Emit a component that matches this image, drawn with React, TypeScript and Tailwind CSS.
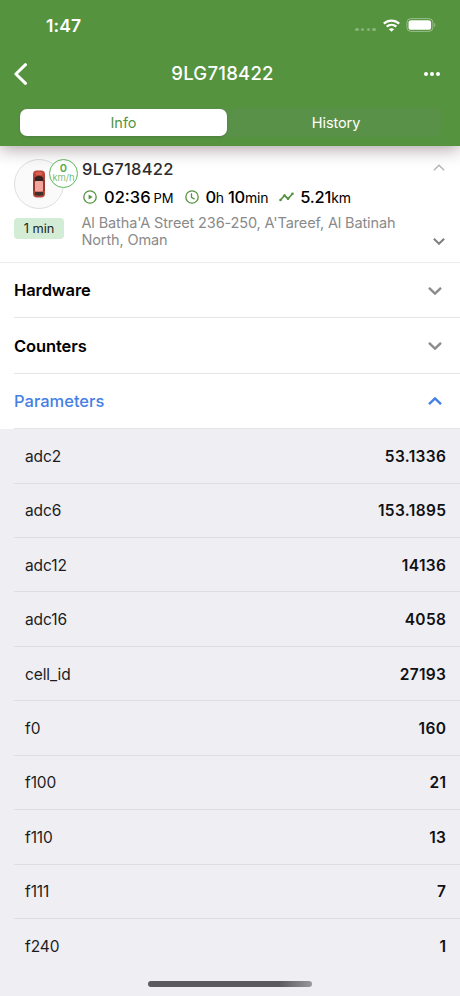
import React from 'react';

interface Parameter {
  name: string;
  value: string;
}

const parameters: Parameter[] = [
  { name: 'adc2', value: '53.1336' },
  { name: 'adc6', value: '153.1895' },
  { name: 'adc12', value: '14136' },
  { name: 'adc16', value: '4058' },
  { name: 'cell_id', value: '27193' },
  { name: 'f0', value: '160' },
  { name: 'f100', value: '21' },
  { name: 'f110', value: '13' },
  { name: 'f111', value: '7' },
  { name: 'f240', value: '1' },
];

const Chevron: React.FC<{ up?: boolean; className?: string; strokeWidth?: number }> = ({
  up,
  className,
  strokeWidth = 2.4,
}) => (
  <svg viewBox="0 0 14 8" fill="none" stroke="currentColor" strokeWidth={strokeWidth} className={className}>
    <path d={up ? 'M1 7.2 7 1.4l6 5.8' : 'M1 .8l6 5.8L13 .8'} />
  </svg>
);

const StatusBar: React.FC = () => (
  <div className="flex h-[50px] items-center justify-between pl-[46px] pr-[24px]">
    <span className="mt-px text-[17.5px] font-semibold leading-5 tracking-[0.15px]">1:47</span>
    <div className="flex items-center">
      <div className="mt-[9px] flex gap-[2.2px]">
        {[0, 1, 2, 3].map(dot => (
          <span key={dot} className="h-[3.6px] w-[3.6px] rounded-full bg-white/30" />
        ))}
      </div>
      <svg viewBox="0 0 17 13" className="ml-[7px] h-[13px] w-[17px]" fill="none" stroke="white" strokeWidth="2.3">
        <path d="M.8 4.6C5.2.5 11.8.5 16.2 4.6" />
        <path d="M3.7 7.7c2.8-2.5 6.8-2.5 9.6 0" />
        <path d="M8.5 12.8 5.9 10.2c1.5-1.3 3.7-1.3 5.2 0Z" fill="white" stroke="none" />
      </svg>
      <svg viewBox="0 0 30 14" className="ml-[6px] h-[14px] w-[30px]">
        <rect x=".9" y=".6" width="26" height="12.8" rx="4" fill="none" stroke="white" strokeOpacity=".4" />
        <rect x="2.5" y="2.2" width="22.6" height="9.6" rx="2.6" fill="white" />
        <path d="M28.3 4.8v4.4c1.4-.7 1.4-3.7 0-4.4Z" fill="white" fillOpacity=".45" />
      </svg>
    </div>
  </div>
);

const Header: React.FC = () => (
  <header className="relative z-10 h-[146px] bg-[#55933f] text-white shadow-[0_3px_16px_rgba(60,30,40,0.42)]">
    <StatusBar />
    <div className="grid h-[48px] grid-cols-[60px_1fr_60px] items-center">
      <svg
        viewBox="0 0 14 22"
        className="ml-[14px] h-[22px] w-[14px]"
        fill="none"
        stroke="white"
        strokeWidth="3"
        strokeLinecap="round"
        strokeLinejoin="round"
      >
        <path d="M11.5 1.7 1.9 11l9.6 9.3" />
      </svg>
      <h1 className="pr-[15px] text-center text-[18.5px] font-medium tracking-[0.25px]">9LG718422</h1>
      <div className="flex justify-end gap-[1.6px] pr-[20.5px]">
        {[0, 1, 2].map(dot => (
          <span key={dot} className="h-[4px] w-[4px] rounded-full bg-white" />
        ))}
      </div>
    </div>
    <div className="mx-[19px] mt-[10px] grid h-[29px] grid-cols-2 rounded-[7px] bg-[#5a9149] px-px text-[14.5px]">
      <button className="mt-[1px] h-[27px] w-[207px] rounded-[7px] bg-white text-[#55933f] shadow-sm">Info</button>
      <button className="h-[29px] pl-[2px] tracking-[-0.1px]">History</button>
    </div>
  </header>
);

const Car: React.FC = () => (
  <svg viewBox="0 0 14 28" className="h-[28px] w-[14px]">
    <rect x="1" y=".5" width="12" height="27" rx="4" fill="#b9443a" />
    <path d="M3.3 2.5Q7 .8 10.7 2.5L10 5H4Z" fill="#d9604f" />
    <path d="M2.4 8q4.6-4.5 9.2 0l-.6 3.5H3Z" fill="#35211f" />
    <rect x="3" y="11" width="8" height="10.5" rx="1" fill="#f2a59d" />
    <path d="M2 10v11M12 10v11" stroke="#672720" strokeWidth=".8" />
    <path d="M3 22h8l.5 3q-4.500 1.500-9 0Z" fill="#40302a" />
  </svg>
);

const VehicleCard: React.FC = () => (
  <section className="flex h-[117px] border-b border-[#ececee] bg-white">
    <div className="relative w-[81px] shrink-0 pl-[14px] pt-[13px]">
      <div className="flex h-[50px] w-[50px] items-center justify-center rounded-full border border-[#dedede] bg-[#fafafa]">
        <Car />
      </div>
      <div className="absolute left-[49px] top-[13px] flex h-[29px] w-[29px] flex-col items-center rounded-full border-[1.5px] border-[#5db75b] bg-white/90 text-[#55ac51]">
        <span className="mt-[2px] text-[11px] font-semibold leading-[12px]">0</span>
        <span className="-mt-[1px] text-[9.5px] font-light leading-[10px]">km/h</span>
      </div>
      <div className="mt-[9px] h-[21px] w-[50px] rounded-[4px] bg-[#d3ecd6] text-center text-[12.8px] leading-[21px] text-[#1b251c]">
        1 min
      </div>
    </div>

    <div className="flex-1 pt-[13px]">
      <h2 className="ml-px text-[16.5px] font-medium leading-[21px] tracking-[0.25px] text-[#2c2c2e]">9LG718422</h2>
      <div className="mt-[5px] flex h-[24px] items-center whitespace-nowrap text-[16.5px] font-medium text-black">
        <svg viewBox="0 0 14 14" className="mr-[7px] ml-[2px] h-[14px] w-[14px]" fill="none" stroke="#55933f" strokeWidth="1.3">
          <circle cx="7" cy="7" r="6.2" />
          <path d="M5.6 4.4v5.2L9.6 7Z" fill="#55933f" stroke="none" />
        </svg>
        <span>02:36<span className="ml-[3px] text-[13px] font-normal tracking-[-0.1px]">PM</span></span>
        <svg viewBox="0 0 14 14" className="ml-[12px] mr-[6px] h-[14px] w-[14px]" fill="none" stroke="#55933f" strokeWidth="1.3">
          <circle cx="7" cy="7" r="6.2" />
          <path d="M6.5 3.3v4L9.5 9.1" />
        </svg>
        <span className="tracking-[-0.25px]">
          0<span className="text-[14px] font-normal">h</span> 10<span className="text-[14px] font-normal">min</span>
        </span>
        <svg viewBox="0 0 15 10" className="ml-[11px] mr-[6px] h-[10px] w-[15px]" fill="none" stroke="#55933f" strokeWidth="1.7">
          <path d="M1.5 8 5.5 3.5 9 6.7 13.5 1.7" />
          <g fill="#55933f" stroke="none">
            <circle cx="1.5" cy="8" r="1.3" />
            <circle cx="5.5" cy="3.5" r="1.3" />
            <circle cx="9" cy="6.7" r="1.3" />
            <circle cx="13.5" cy="1.7" r="1.3" />
          </g>
        </svg>
        <span className="tracking-[-0.2px]">5.21<span className="text-[14px] font-normal">km</span></span>
      </div>
      <p className="mt-[5px] ml-[0.5px] text-[14.5px] leading-[17px] tracking-[-0.13px] text-[#8a8a8a]">
        Al Batha'A Street 236-250, A'Tareef, Al Batinah
        <br />
        North, Oman
      </p>
    </div>

    <div className="flex w-[27px] shrink-0 flex-col justify-between pb-[17px] pt-[18px]">
      <Chevron up strokeWidth={1.7} className="h-[7px] w-[12px] text-[#b5b5b5]" />
      <Chevron className="h-[7px] w-[12px] text-[#808080]" />
    </div>
  </section>
);

const SectionRow: React.FC<{ title: string; open?: boolean }> = ({ title, open }) => (
  <button
    className={`ml-[14px] flex h-[55.4px] items-center justify-between border-b border-[#e5e5e8] pr-[18px] pt-px text-[16.5px] ${
      open ? 'font-medium text-[#4580e4]' : 'font-semibold tracking-[-0.1px] text-black'
    }`}
  >
    {title}
    <Chevron up={open} className={`h-[8px] w-[14px] ${open ? 'text-[#4580e4]' : 'text-[#8c8c8e]'}`} />
  </button>
);

export default function App() {
  return (
    <div
      className="flex h-[996px] w-[460px] flex-col overflow-hidden bg-white"
      style={{ fontFamily: 'Inter, "Liberation Sans", sans-serif' }}
    >
      <Header />
      <VehicleCard />

      {/* Sections */}
      <SectionRow title="Hardware" />
      <SectionRow title="Counters" />
      <SectionRow title="Parameters" open />

      {/* Parameter list */}
      <div className="relative flex-1 bg-[#efeef3] text-[15.5px] text-[#1c1c1e]">
        {parameters.map(param => (
          <div
            key={param.name}
            className="ml-[14px] flex h-[54.45px] items-center justify-between border-b border-[#dfdfe3] pl-[11px] pr-[14px] pt-px last-of-type:border-0"
          >
            <span className="tracking-[-0.1px]">{param.name}</span>
            <span className="-mr-[0.3px] font-semibold tracking-[0.35px] text-[#111113]">{param.value}</span>
          </div>
        ))}
        <span className="absolute bottom-[9px] left-[148px] h-[6px] w-[164px] rounded-full bg-linear-to-r from-[#5b5a5e] from-80% to-[#99989c]" />
      </div>
    </div>
  );
}
